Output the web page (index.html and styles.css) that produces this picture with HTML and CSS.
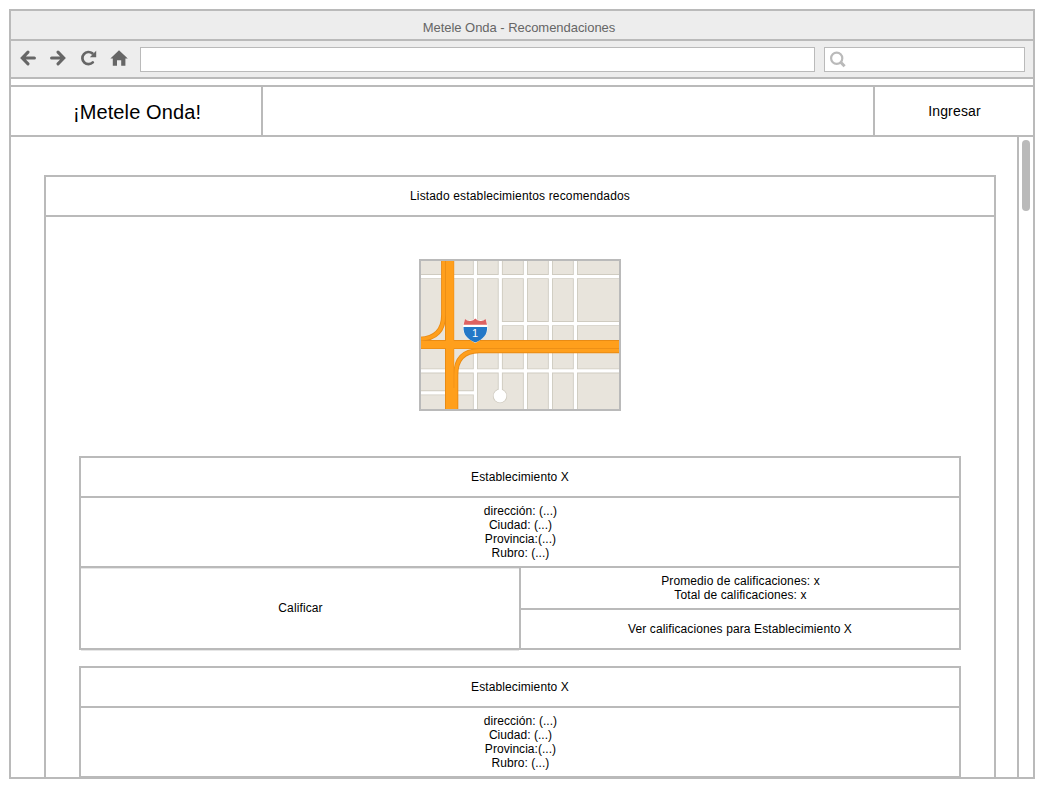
FILE: index.html
```html
<!DOCTYPE html>
<html lang="es">
<head>
<meta charset="utf-8">
<title>Metele Onda - Recomendaciones</title>
<link rel="stylesheet" href="styles.css">
</head>
<body>
<div class="window">
  <div class="titlebar">Metele Onda - Recomendaciones</div>
  <div class="toolbar">
    <svg class="nav" viewBox="14 42 120 34" width="120" height="34">
      <g fill="none" stroke="#666" stroke-width="3.1" stroke-linecap="round">
        <path d="M34.4 58H23M28 52.2L22.3 58L28 63.8"/>
        <path d="M51.6 58H63M58 52.2L63.7 58L58 63.8"/>
        <path stroke-width="2.7" d="M92.8 62.4A6.1 6.1 0 1 1 92.4 53.4"/>
      </g>
      <path fill="#666" d="M96.2 50.8V57.2H89.8ZM119 50.2L127.8 58.6H125.4V65.8H121.2V60.3H117V65.8H112.8V58.6H110.4Z"/>
    </svg>
    <div class="address"></div>
    <div class="search">
      <svg viewBox="0 0 18 18" width="18" height="18" fill="none" stroke="#bababa">
        <circle cx="7.7" cy="7.2" r="5.6" stroke-width="2.2"/>
        <path d="M11.7 11.2L15.6 15.2" stroke-width="3"/>
      </svg>
    </div>
  </div>
  <div class="strip"></div>
  <header class="header">
    <div class="brand">¡Metele Onda!</div>
    <div class="spacer"></div>
    <div class="login">Ingresar</div>
  </header>
  <div class="body">
    <main class="content">
      <section class="panel">
        <h1 class="panel-title">Listado establecimientos recomendados</h1>
        <svg class="map" viewBox="419 259 202 152" width="202" height="152">
          <rect x="420" y="260" width="200" height="150" fill="#e8e4dc"/>
          <path class="street-edge" d="M475.4 260V410M500.3 260V393M525.4 260V410M550.4 260V410M575.4 260V410M420 276.6H620M500.3 323.6H620M420 370.9H620M420 392.8H475.4"/>
          <circle cx="500" cy="396" r="7.2" fill="#cfcbc0"/>
          <path class="street" d="M475.4 260V410M500.3 260V393M525.4 260V410M550.4 260V410M575.4 260V410M420 276.6H620M498.8 323.6H620M420 370.9H620M420 392.8H475.4"/>
          <circle cx="500" cy="396" r="6.4" fill="#fff"/>
          <path fill="none" stroke="#e98b14" stroke-width="5" d="M443.6 260V315Q443.6 338 420 339.2M455.8 410V375Q455.8 351 479 350.7H620"/>
          <path fill="#e98b14" d="M445 260H454.2V410H445ZM420 340H620V349H420Z"/>
          <path fill="none" stroke="#ff9f1c" stroke-width="3.2" d="M443.6 260V315Q443.6 338 420 339.2M455.8 410V375Q455.8 351 479 350.7H620"/>
          <path fill="#ff9f1c" d="M446 260H453.7V410H446ZM420 341H620V348.3H420ZM453 388H457V410H453Z"/>
          <path fill="#fff" d="M464.8 319.2Q467.5 321.5 470.3 320.3Q473.5 320.2 475.3 318Q477 320.2 480.4 320.3Q483 321.5 485.8 319.2L487.5 325C488.5 334 484 338.5 475.3 343C466.5 338.5 462 334 463.2 325Z"/>
          <path fill="#de6262" d="M465 319Q467.5 321.6 470.3 321Q473.5 321 475.3 318.6Q477 321 480.4 321Q483 321.6 485.6 319L487 324.8H463.6Z"/>
          <path fill="#2478c7" d="M463.5 327H487.1C487.3 335 483.5 338.7 475.3 342.6C467.1 338.7 463.3 335 463.5 327Z"/>
          <text x="475.1" y="336.8" class="route">1</text>
          <rect x="420" y="260" width="200" height="150" fill="none" stroke="#bababa" stroke-width="2"/>
        </svg>
        <article class="card">
          <h2 class="name">Establecimiento X</h2>
          <div class="details">dirección: (...)<br>Ciudad: (...)<br>Provincia:(...)<br>Rubro: (...)</div>
          <div class="actions">
            <div class="rate">Calificar</div>
            <div class="ratings">
              <div class="totals">Promedio de calificaciones: x<br>Total de calificaciones: x</div>
              <div class="view">Ver calificaciones para Establecimiento X</div>
            </div>
          </div>
        </article>
        <article class="card">
          <h2 class="name">Establecimiento X</h2>
          <div class="details">dirección: (...)<br>Ciudad: (...)<br>Provincia:(...)<br>Rubro: (...)</div>
        </article>
      </section>
    </main>
    <div class="scrollbar"><div class="thumb"></div></div>
  </div>
</div>
</body>
</html>
```
FILE: styles.css
```css
* { box-sizing: border-box; }
body {
  margin: 0;
  padding: 9px;
  background: #fff;
  color: #000;
  font: 12px/14px "Liberation Sans", Arial, sans-serif;
  letter-spacing: 0.11px;
  text-align: center;
}
.window {
  width: 1026px;
  height: 770px;
  border: 2px solid #bababa;
  display: flex;
  flex-direction: column;
  overflow: hidden;
}
.titlebar {
  height: 30px;
  flex: none;
  padding: 2px 6px 0 0;
  border-bottom: 2px solid #bababa;
  background: #ededed;
  color: #666;
  font-size: 13px;
  letter-spacing: -0.04px;
  line-height: 30px;
}
.toolbar {
  height: 38px;
  flex: none;
  display: flex;
  align-items: flex-start;
  padding: 1px 8px 0 3px;
  border-bottom: 2px solid #bababa;
  background: #ededed;
}
.nav { flex: none; }
.address, .search {
  height: 25px;
  margin-top: 5px;
  border: 1px solid #bababa;
  background: #fff;
}
.address { width: 675px; margin-left: 6px; }
.search { width: 201px; margin-left: 9px; padding: 3px 4px; text-align: left; }
.search svg { display: block; }
.strip { height: 8px; flex: none; border-bottom: 2px solid #bababa; }
.header {
  height: 50px;
  flex: none;
  display: flex;
  border-bottom: 2px solid #bababa;
  line-height: 50px;
}
.brand { width: 252px; padding-left: 2px; border-right: 2px solid #bababa; font-size: 20px; }
.spacer { flex: 1; }
.login { width: 160px; padding-left: 1px; border-left: 2px solid #bababa; font-size: 14px; letter-spacing: 0.16px; line-height: 48px; }
.body { flex: 1; min-height: 0; display: flex; }
.content { flex: 1; padding: 38px 21px 0 33px; overflow: hidden; }
.panel {
  height: 700px;
  padding: 0 33px;
  border: 2px solid #bababa;
}
.panel-title {
  height: 40px;
  margin: 0 -33px;
  border-bottom: 2px solid #bababa;
  font-size: 12px;
  font-weight: normal;
  letter-spacing: 0.16px;
  line-height: 38px;
}
.map { display: block; margin: 42px auto 45px; }
.street-edge { fill: none; stroke: #cfcbc0; stroke-width: 5; }
.street { fill: none; stroke: #fff; stroke-width: 3.2; }
.route { fill: #fff; font-size: 11px; text-anchor: middle; }
.card { margin-bottom: 16px; border: 2px solid #bababa; }
.name {
  height: 40px;
  margin: 0;
  border-bottom: 2px solid #bababa;
  font-size: 12px;
  font-weight: normal;
  line-height: 38px;
}
.details { height: 70px; padding: 6px 0 0 1px; border-bottom: 2px solid #bababa; letter-spacing: 0.04px; }
.actions { height: 80px; display: flex; }
.rate { width: 438px; padding-left: 1px; line-height: 80px; box-shadow: inset 0 1px #e6e6e6, 0 2px #bababa, 0 3px #e6e6e6; }
.ratings { flex: 1; border-left: 2px solid #bababa; }
.totals { height: 42px; padding: 6px 0 0 1px; border-bottom: 2px solid #bababa; }
.view { line-height: 38px; }
.scrollbar { width: 16px; border-left: 2px solid #bababa; padding: 3px; }
.thumb { width: 8px; height: 71px; border-radius: 4px; background: #bababa; }
```
